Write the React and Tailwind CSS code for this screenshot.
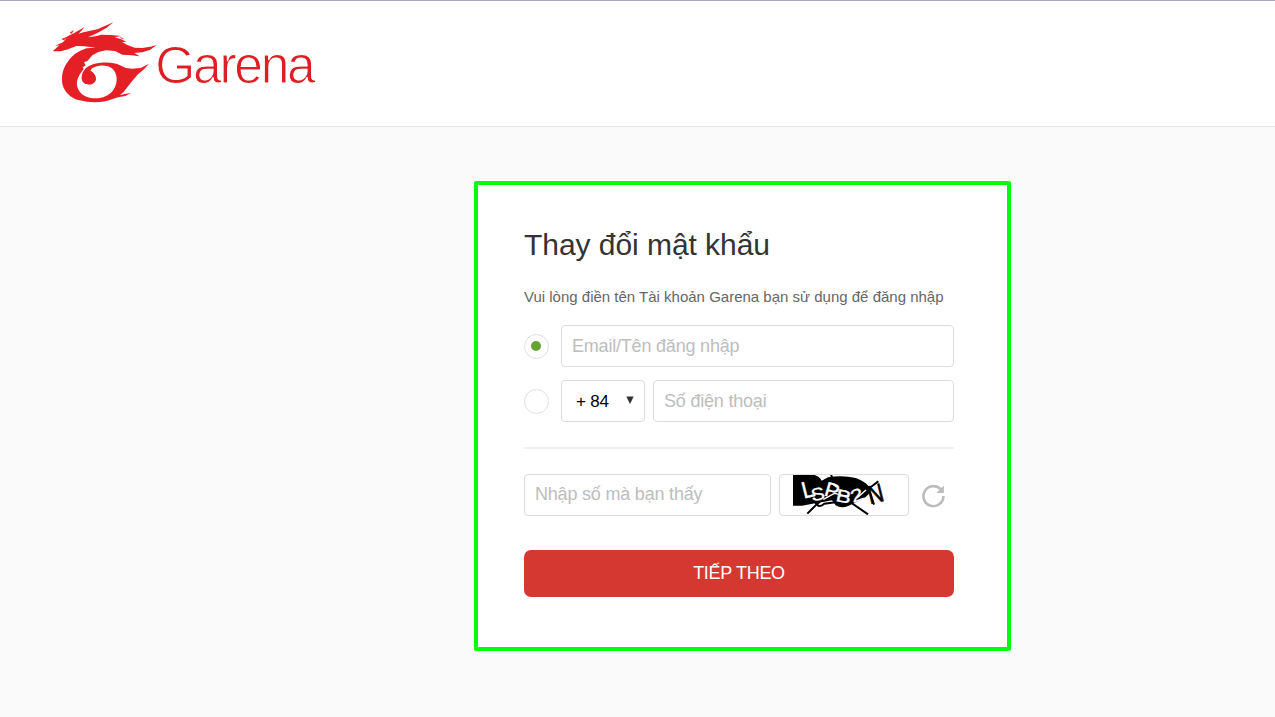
import React from "react";

function DragonMark() {
  return (
    <svg viewBox="0 0 390 300" className="h-[100px] w-[130px] shrink-0" fill="#e41f25">
      <path d="M38 109 L58 91 L45 92 L69 82 L79 70 L69 73 L88 61 L96 58 L134 36 L116 56 L130 52 L172 43 L220 22 L200 38 L172 54 L144 67 L166 64 L184 59 L212 60 L244 63 L224 67 L244 73 L259 80 L246 81 L262 90 L284 98 L307 99 L331 95 L350 90 L331 104 L307 112 L283 114 L299 124 L274 121 L247 119 L225 108 L198 106 L175 111 L157 121 L143 137 L132 142 L137 151 L128 157 L131 162 L122 174 C109 194 106 211 119 230 C131 246 157 253 179 249 C210 245 228 223 230 196 C231 176 222 160 204 154 C188 149 170 151 156 160 L151 166 C161 173 169 183 168 193 C166 205 154 211 142 208 C128 206 122 194 126 180 C130 160 151 147 177 144 C203 141 225 143 240 151 L258 159 L276 161 L302 159 L327 146 L312 163 L294 178 L276 199 L260 219 L250 232 L240 240 L258 236 L273 234 L256 243 L234 247 L216 253 C192 263 151 265 119 256 C91 250 73 230 67 206 C63 181 70 157 85 138 C98 119 115 109 139 100 L167 98 L133 94 L109 93 L84 103 L62 109 Z" />
      <path d="M64 72 L80 66 L72 76 Z M89 54 L101 44 L96 56 Z M239 67 L253 70 L244 71 Z" />
    </svg>
  );
}

function Wordmark() {
  return (
    <svg viewBox="0 0 180 70" className="-ml-5 mt-[15px] h-[70px] w-[180px] shrink-0">
      <text
        transform="translate(5.3 52.8) scale(0.99 1)"
        textLength="162"
        lengthAdjust="spacing"
        className="font-['Liberation_Sans',sans-serif] text-[52px]"
        fill="#dd1f25"
        stroke="#fff"
        strokeWidth="1"
      >
        Garena
      </text>
    </svg>
  );
}

function Radio({ checked }) {
  return (
    <span className="flex size-[25px] shrink-0 items-center justify-center rounded-full border border-[#e0e0e0] bg-white">
      {checked && <span className="mr-px size-[10px] rounded-full bg-[#64a431]" />}
    </span>
  );
}

function Captcha() {
  return (
    <svg viewBox="0 0 330 150" className="-ml-px h-[50px] w-[110px] shrink-0">
      <path d="M21 15 H86 Q101 20 107 32 L126 22 Q170 15 209 24 Q241 35 255 58 Q250 78 227 88 L188 107 Q166 117 149 106 L138 91 Q115 96 91 99 L48 107 H21 Z" fill="#000" />
      <g fill="none" stroke="#000" strokeWidth="6">
        <path d="M64 131 L91 104 L112 86 L142 81 M135 15 L143 31 M83 88 Q96 120 115 101 L148 97 M185 91 L246 133 M164 109 L208 90 M205 78 Q244 62 277 34 M236 46 L252 68 L264 104" />
      </g>
      <g className="font-['Liberation_Sans',sans-serif]" fontSize="62" fill="#fff" stroke="#fff" strokeWidth="1">
        <text transform="translate(53 86) rotate(-14) scale(1.1 1.15)">L</text>
        <text transform="translate(78 94) rotate(-10) scale(1 .85)">S</text>
        <text transform="translate(112 76) rotate(16) scale(1.05 1)">P</text>
        <text transform="translate(147 92) rotate(12) scale(1.1 .85)">B</text>
        <text transform="translate(201 99) rotate(-20) scale(1.1 .85)">2</text>
        <text transform="translate(252 103) rotate(-14) scale(1.05 1.25)" fill="#000" stroke="#000" strokeWidth="1.5">N</text>
      </g>
      <path d="M112 88 L145 70 L190 80 M140 42 L152 52 M213 84 L240 60" fill="none" stroke="#fff" strokeWidth="4" />
    </svg>
  );
}

function RefreshIcon() {
  return (
    <svg viewBox="0 0 26 26" className="size-[26px]" fill="none">
      <path d="M20.6 6.2 A10 10 0 1 0 23.4 13" stroke="#bcbcbc" strokeWidth="2.6" />
      <path d="M23.9 2.5 V10 H16.4 Z" fill="#bcbcbc" />
    </svg>
  );
}

const field =
  "h-[42px] rounded-[4px] border border-[#dcdcdc] bg-white px-[10px] text-[18px] tracking-[-0.2px] text-black outline-none placeholder:text-[#bdbdbd]";

export default function App() {
  return (
    <div className="flex h-[717px] w-[1275px] flex-col overflow-hidden bg-[#fafafa] font-['Liberation_Sans',Arial,sans-serif]">
      <header className="flex h-[127px] shrink-0 items-start border-b border-t border-b-[#e5e5e5] border-t-[#aaa8c0] bg-white pl-10 pt-[14px]">
        <DragonMark />
        <Wordmark />
      </header>
      <main className="ml-[474px] mt-[54px] h-[470px] w-[537px] rounded-[2px] border-4 border-[#04fc0c] bg-white pl-[46px] pr-[53px] pt-[40px]">
        <h1 className="h-10 whitespace-nowrap text-[30px] leading-10 tracking-[-0.05px] text-[#333]">Thay đổi mật khẩu</h1>
        <p className="mt-[22px] h-5 whitespace-nowrap text-[15px] leading-5 text-[#666]">
          Vui lòng điền tên Tài khoản Garena bạn sử dụng để đăng nhập
        </p>
        <form onSubmit={(e) => e.preventDefault()}>
          <div className="mt-[18px] flex items-center gap-3">
            <Radio checked />
            <input className={field + " min-w-0 flex-1"} placeholder="Email/Tên đăng nhập" />
          </div>
          <div className="mt-[13px] flex items-center">
            <Radio />
            <div className="ml-3 flex h-[42px] w-[84px] items-center justify-between rounded-[4px] border border-[#dcdcdc] pl-[14px] pr-[10px] text-[17px] text-black">
              <span className="pt-[2px] tracking-[-0.2px]">+ 84</span>
              <svg viewBox="0 0 8 8" className="mb-[2px] size-2" fill="#333">
                <path d="M.3 .5 H7.7 L4 8 Z" />
              </svg>
            </div>
            <input className={field + " ml-2 min-w-0 flex-1"} placeholder="Số điện thoại" />
          </div>
          <div className="mt-[25px] h-[2px] bg-[#f0f0f0]" />
          <div className="mt-[25px] flex items-center">
            <input className={field + " w-[247px] pb-[2px]"} placeholder="Nhập số mà bạn thấy" />
            <div className="ml-2 flex h-[42px] w-[130px] items-center overflow-hidden rounded-[4px] border border-[#dcdcdc] pl-[7px]">
              <Captcha />
            </div>
            <button type="button" className="ml-[11px] mt-[2px]" aria-label="Refresh">
              <RefreshIcon />
            </button>
          </div>
          <button type="submit" className="mt-[34px] flex h-[47px] w-full items-center justify-center rounded-[7px] bg-[#d43831] text-[18px] tracking-[-0.3px] text-white">
            TIẾP THEO
          </button>
        </form>
      </main>
    </div>
  );
}
